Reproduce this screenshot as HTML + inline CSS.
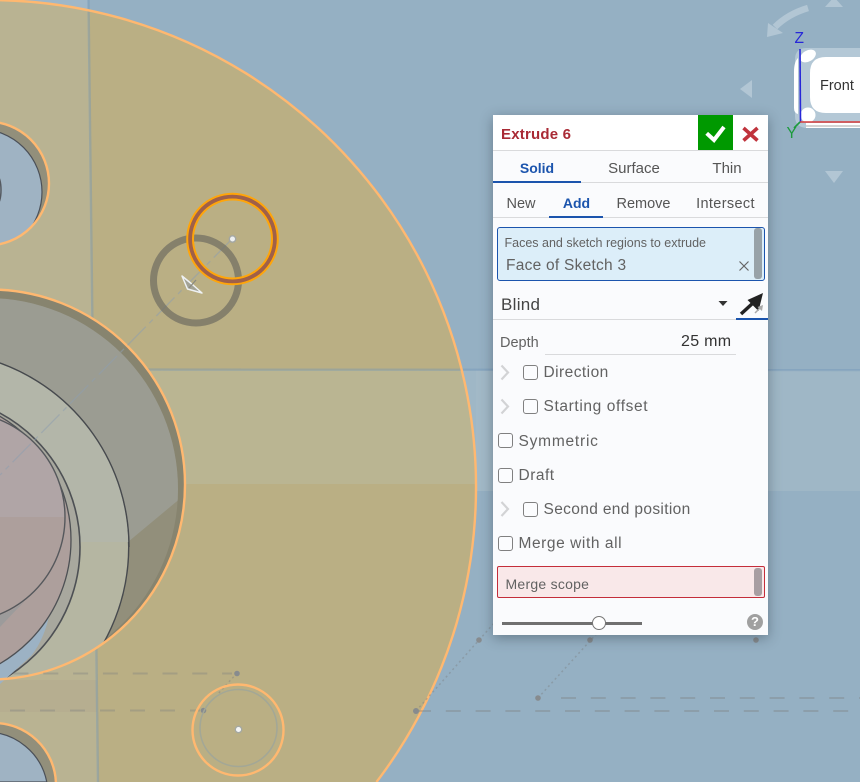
<!DOCTYPE html>
<html><head><meta charset="utf-8"><style>
html,body{margin:0;padding:0;width:860px;height:782px;overflow:hidden;background:#95b0c3}
#r{position:absolute;left:0;top:0;width:860px;height:782px;overflow:hidden}
#s{position:absolute;left:0;top:0;display:block}
.p{position:absolute;left:493px;top:115px;width:275px;height:520px;background:#fafbfd;box-shadow:0 3px 12px rgba(30,40,50,.38)}
.a{position:absolute;display:block}
.t{position:absolute;font-family:"Liberation Sans",sans-serif;font-size:15.5px;letter-spacing:.35px;line-height:20px;height:20px;color:#626262;white-space:nowrap}
.c{width:120px;text-align:center;letter-spacing:0}
.b{position:absolute;width:13px;height:13px;border:1px solid #808080;border-radius:3px;background:#fbfcfe}
</style></head><body><div id="r">
<svg id="s" width="860" height="782" viewBox="0 0 860 782" xmlns="http://www.w3.org/2000/svg">
<defs>
<clipPath id="big"><path d="M-11,0A487,487 0 0 1 376.5,782H-11Z"/></clipPath>
<clipPath id="mid"><circle cx="-10" cy="484.5" r="195"/></clipPath>
<clipPath id="midin"><circle cx="-13" cy="489" r="191"/></clipPath>
<clipPath id="hole"><circle cx="-13" cy="183.5" r="62"/></clipPath>
<clipPath id="hole2"><path d="M-6,723A62,62 0 0 1 55.9,782H-6Z"/></clipPath>
</defs>
<rect width="860" height="782" fill="#95b0c3"/>
<rect x="0" y="370" width="860" height="121" fill="#9fb7c6"/>
<rect x="476" y="370" width="20" height="121" fill="#a2b9c7"/>
<polygon points="0,0 88,0 88,12 0,12" fill="#9fb7c8"/>
<g clip-path="url(#big)">
<rect width="860" height="782" fill="#baaf84"/>
<polygon points="0,0 88,0 98,782 0,782" fill="#b9b392"/>
<rect x="0" y="370" width="500" height="114" fill="#bab592"/>
<polygon points="0,680 97,680 97,712 0,712" fill="#b6ae90"/>
</g>
<line x1="88.5" y1="0" x2="98" y2="782" stroke="#7295b5" stroke-opacity=".42" stroke-width="2.4"/>
<line x1="0" y1="369.5" x2="860" y2="370" stroke="#6f93b8" stroke-opacity=".38" stroke-width="2.4"/>
<!-- top left hole -->
<circle cx="-13" cy="183.5" r="62" fill="#928f7b"/>
<g clip-path="url(#hole)"><circle cx="-21" cy="192" r="63" fill="#9fb3c3" stroke="#4b5058" stroke-width="1.2"/></g>
<circle cx="-13" cy="183.5" r="62" fill="none" stroke="#ffb870" stroke-width="2.4"/>
<ellipse cx="-3" cy="190" rx="4" ry="14" fill="none" stroke="#555a60" stroke-width="1.5"/>
<!-- bottom left hole -->
<path d="M-6,723A62,62 0 0 1 55.9,782H-6Z" fill="#928f7b"/>
<g clip-path="url(#hole2)"><path d="M-14,732A62,62 0 0 1 46.8,782H-14Z" fill="#9fb3c3" stroke="#4b5058" stroke-width="1.2"/></g>
<path d="M-6,723A62,62 0 0 1 55.9,782" fill="none" stroke="#ffb870" stroke-width="2.4"/>
<!-- middle big circle -->
<g clip-path="url(#mid)">
<rect x="-220" y="280" width="420" height="420" fill="#87846f"/>
<circle cx="-13" cy="489" r="191" fill="#928f7b"/>
<path d="M-220,280H200V482L128,542L-220,542Z" fill="#9b9c92" clip-path="url(#midin)"/>
<circle cx="-67" cy="547" r="195.7" fill="#b5b6a2" stroke="#474a4e" stroke-width="1.4"/>
<path d="M0,363.5A195,195 0 0 1 128.5,542L-60,542V340Z" fill="#b3b6a9"/>
<path d="M0,363A195.7,195.7 0 0 1 129,547" fill="none" stroke="#474a4e" stroke-width="1.4"/>
</g>
<circle cx="-72" cy="547" r="152" fill="#a8a89e" stroke="#4d5054" stroke-width="1.6"/>
<path d="M49.5,614Q44,640 31,656L0,684H-20V640Z" fill="#9cb2c4"/>
<circle cx="-72" cy="540" r="143" fill="#ad9f9c" stroke="#4d5054" stroke-width="1.3"/>
<path d="M-40,412A105,105 0 0 1 65,517H-40Z" fill="#b0a5a6"/>
<rect x="-60" y="420" width="60" height="97" fill="#b0a5a6"/>
<circle cx="-40" cy="517" r="105" fill="none" stroke="#55585c" stroke-width="1.4"/>
<path d="M25,601Q14,612 0,627V615Q14,610 25,601Z" fill="#9c9b9b"/>
<circle cx="-10" cy="484.5" r="195" fill="none" stroke="#ffb870" stroke-width="2.4"/>
<!-- diagonal center line -->
<line x1="232" y1="239" x2="0" y2="475" stroke="#8e9fae" stroke-opacity=".55" stroke-width="1.3" stroke-dasharray="26 5 5 5"/>
<path d="M-11,0A487,487 0 0 1 376.5,782" fill="none" stroke="#ffb870" stroke-width="2.4"/>
<!-- grey ring -->
<circle cx="196" cy="280.5" r="42.5" fill="none" stroke="#6b6a60" stroke-opacity=".68" stroke-width="7"/>
<!-- orange ring -->
<circle cx="232.5" cy="239" r="42.5" fill="none" stroke="#9f6049" stroke-width="6.5"/>
<circle cx="232.5" cy="239" r="45.3" fill="none" stroke="#ffa50a" stroke-width="2"/>
<circle cx="232.5" cy="239" r="39.5" fill="none" stroke="#ffa50a" stroke-width="2"/>
<circle cx="232.5" cy="239" r="3.2" fill="#eef0f0" stroke="#a3a7a4" stroke-width="1.4"/>
<!-- arrow glyph -->
<path d="M182,276L187.5,289L202,293L193,285Z" fill="#a3a396" stroke="#eef1f3" stroke-width="1.5" stroke-linejoin="round"/>
<line x1="196" y1="280" x2="189" y2="288" stroke="#8a8a80" stroke-width="1.3"/>
<!-- dashes -->
<g stroke="#7d7f80" stroke-opacity=".36" stroke-width="2" fill="none">
<line x1="13.5" y1="673.5" x2="232" y2="673.5" stroke-dasharray="15 14.8"/>
<line x1="10" y1="710.5" x2="200" y2="710.5" stroke-dasharray="15 15"/>
<line x1="416" y1="711" x2="860" y2="711" stroke-dasharray="15 14.8"/>
<line x1="561" y1="698" x2="860" y2="698" stroke-dasharray="15 14.8"/>
</g>
<g stroke="#7d7f80" stroke-opacity=".42" stroke-width="1.5" fill="none" stroke-dasharray="2 3">
<line x1="416" y1="711" x2="495" y2="622"/>
<line x1="538" y1="698" x2="600" y2="630"/>
<line x1="237" y1="673" x2="218" y2="694"/>
</g>
<g fill="#878b8e">
<circle cx="416" cy="711" r="3"/><circle cx="479" cy="640" r="2.8"/><circle cx="538" cy="698" r="2.8"/>
<circle cx="590" cy="640" r="2.8"/><circle cx="756" cy="640" r="2.8"/><circle cx="237" cy="673.5" r="2.8"/><circle cx="203.5" cy="710.5" r="2.8"/>
</g>
<!-- small bottom circle -->
<circle cx="238.5" cy="728" r="38.5" fill="none" stroke="#a3a796" stroke-width="1.6"/>
<circle cx="238" cy="730" r="45.5" fill="none" stroke="#ffb870" stroke-width="2.4"/>
<circle cx="238.5" cy="729.5" r="3.2" fill="#f4f5f5" stroke="#a4a8a2" stroke-width="1.3"/>
<!-- view cube -->
<path d="M808,8Q788,14 775,27" fill="none" stroke="#b2c6d4" stroke-width="6.5"/>
<polygon points="767,37 768,23 783,33" fill="#b2c6d4"/>
<polygon points="825,7 843,7 834,-3" fill="#b2c6d4"/>
<polygon points="740,89 752,80 752,98" fill="#b2c6d4"/>
<polygon points="825,171 843,171 834,183" fill="#b2c6d4"/>
<path d="M860,48H806Q795,48 795,60V116Q795,128 808,128H860Z" fill="#b4c8d6"/>
<path d="M860,57H826Q810,57 810,73V97Q810,113 826,113H860Z" fill="#fff"/>
<path d="M798,58Q794,62 794,72V108Q794,113 798,114Z" fill="#fff"/>
<ellipse cx="808" cy="56" rx="8.5" ry="5.5" transform="rotate(-30 808 56)" fill="#fff"/>
<ellipse cx="808" cy="115" rx="7.5" ry="7.5" fill="#fff"/>
<rect x="806" y="123" width="54" height="5" fill="#fff"/>
<line x1="806" y1="126" x2="860" y2="126" stroke="#aaa" stroke-width="1"/>
<line x1="800" y1="49" x2="800.5" y2="122" stroke="#2727d8" stroke-width="1.6"/>
<line x1="800" y1="122" x2="860" y2="122" stroke="#d83a3a" stroke-width="1.6"/>
<line x1="800" y1="122" x2="794" y2="128" stroke="#1c9a3c" stroke-width="1.6"/>
<text x="794.5" y="43" font-family="Liberation Sans,sans-serif" font-size="15.5" fill="#2727d8">Z</text>
<text x="786.5" y="138" font-family="Liberation Sans,sans-serif" font-size="15.5" fill="#1c9a3c">Y</text>
<text x="820" y="90" font-family="Liberation Sans,sans-serif" font-size="14.5" fill="#333">Front</text>
</svg>

<div class="p"></div>
<!-- header -->
<div class="a" style="left:493px;top:115px;width:275px;height:35px;background:#fff"></div>
<div class="t" style="left:501px;top:125px;color:#a92a35;font-weight:bold;font-size:15px;letter-spacing:.2px">Extrude 6</div>
<div class="a" style="left:698px;top:115px;width:35px;height:35px;background:#009900"></div>
<svg class="a" style="left:693px;top:115px" width="80" height="36">
<path d="M13.7,18.3L21,25L31,12" fill="none" stroke="#fff" stroke-width="4"/>
<path d="M50.5,13L64.5,25.5M64.5,13L50.5,25.5" fill="none" stroke="#c0333c" stroke-width="3.6"/>
</svg>
<div class="a" style="left:493px;top:150px;width:275px;height:1px;background:#d9dadc"></div>
<!-- tabs -->
<div class="a" style="left:493px;top:182px;width:275px;height:1px;background:#d9dadc"></div>
<div class="a" style="left:493px;top:181px;width:88px;height:2px;background:#1b54ad"></div>
<div class="t c" style="left:477px;top:158px;color:#1b54ad;font-weight:bold;font-size:14px">Solid</div>
<div class="t c" style="left:574px;top:159px;font-size:15px;color:#555">Surface</div>
<div class="t c" style="left:667px;top:159px;font-size:15px;color:#555">Thin</div>
<div class="t c" style="left:461px;top:194px;color:#555;font-size:14.5px">New</div>
<div class="t c" style="left:516.5px;top:193px;color:#1b54ad;font-weight:bold;font-size:14px">Add</div>
<div class="t c" style="left:583.5px;top:194px;color:#555;font-size:14.5px">Remove</div>
<div class="t c" style="left:665.5px;top:194px;color:#555;font-size:14.5px;letter-spacing:.35px">Intersect</div>
<div class="a" style="left:493px;top:217px;width:275px;height:1px;background:#d9dadc"></div>
<div class="a" style="left:549px;top:216px;width:54px;height:2px;background:#1b54ad"></div>
<!-- query box -->
<div class="a" style="left:497px;top:227px;width:266px;height:52px;background:#dceef9;border:1px solid #1b54ad;border-radius:3px"></div>
<div class="a" style="left:754px;top:228px;width:8px;height:51px;background:#98a2a8;border-radius:3px"></div>
<div class="t" style="left:504.5px;top:233px;font-size:12.5px;letter-spacing:0">Faces and sketch regions to extrude</div>
<div class="t" style="left:506px;top:256px;font-size:15.5px;letter-spacing:.25px">Face of Sketch 3</div>
<svg class="a" style="left:738px;top:260px" width="12" height="12"><path d="M1.5,1.5L10.5,10.5M10.5,1.5L1.5,10.5" stroke="#666" stroke-width="1.2"/></svg>
<!-- blind -->
<div class="t" style="left:501px;top:295px;font-size:17px;letter-spacing:.3px;color:#444">Blind</div>
<svg class="a" style="left:717px;top:300px" width="12" height="7"><polygon points="1.5,1 10.5,1 6,6" fill="#333"/></svg>
<svg class="a" style="left:738px;top:290px" width="30" height="28">
<path d="M3,24L15,13" stroke="#222" stroke-width="3.5"/>
<polygon points="25,3 9.5,10 14,14.5 20.5,21" fill="#222"/>
<path d="M17,23L23,17" stroke="#aaa" stroke-width="1.5"/><polygon points="25,15 24,21 19.5,17" fill="#aaa"/>
</svg>
<div class="a" style="left:493px;top:319px;width:244px;height:1px;background:#d9dadc"></div>
<div class="a" style="left:736px;top:318px;width:32px;height:2px;background:#1b54ad"></div>
<!-- depth -->
<div class="t" style="left:500px;top:333px;font-size:14.5px;letter-spacing:0">Depth</div>
<div class="t" style="left:681px;top:332px;font-size:16px;letter-spacing:.3px;color:#333">25 mm</div>
<div class="a" style="left:545px;top:354px;width:191px;height:1px;background:#d9dadc"></div>
<!-- rows -->
<svg class="a" style="left:498px;top:363px" width="14" height="160" fill="none" stroke="#d2d3d5" stroke-width="2.2">
<path d="M3.5,2.5L10,9.5L3.5,16.5"/>
<path d="M3.5,36.5L10,43.5L3.5,50.5"/>
<path d="M3.5,139L10,146L3.5,153"/>
</svg>
<div class="b" style="left:523px;top:365px"></div>
<div class="t" style="left:543.5px;top:363px;letter-spacing:.45px">Direction</div>
<div class="b" style="left:523px;top:399px"></div>
<div class="t" style="left:543.5px;top:397px;letter-spacing:.62px">Starting offset</div>
<div class="b" style="left:498px;top:433px"></div>
<div class="t" style="left:518.5px;top:432px;letter-spacing:.78px">Symmetric</div>
<div class="b" style="left:498px;top:468px"></div>
<div class="t" style="left:518.5px;top:466px;letter-spacing:.5px">Draft</div>
<div class="b" style="left:523px;top:502px"></div>
<div class="t" style="left:543.5px;top:500px">Second end position</div>
<div class="b" style="left:498px;top:536px"></div>
<div class="t" style="left:518.5px;top:534px;letter-spacing:.57px">Merge with all</div>
<!-- merge scope -->
<div class="a" style="left:497px;top:566px;width:266px;height:30px;background:#f9e8e9;border:1px solid #c42d3a;border-radius:2px"></div>
<div class="a" style="left:754px;top:568px;width:8px;height:28px;background:#a89ea2;border-radius:3px"></div>
<div class="t" style="left:505.5px;top:574px;font-size:14px;letter-spacing:.25px">Merge scope</div>
<!-- slider -->
<div class="a" style="left:502px;top:622px;width:140px;height:3px;background:#707070"></div>
<div class="a" style="left:592px;top:616px;width:12px;height:12px;border:1.3px solid #777;border-radius:50%;background:#fff"></div>
<div class="a" style="left:747px;top:614px;width:16px;height:16px;border-radius:50%;background:#a0a0a0;color:#fff;font:bold 13px/16px 'Liberation Sans',sans-serif;text-align:center">?</div>
</div></body></html>
